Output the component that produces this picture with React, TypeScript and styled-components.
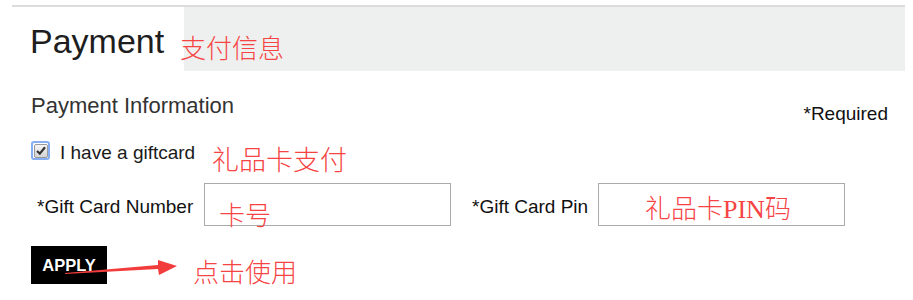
import styled, { createGlobalStyle } from "styled-components";

const GlobalStyle = createGlobalStyle`
  html, body {
    margin: 0;
    padding: 0;
    background: #fff;
  }
  body {
    font-family: "Liberation Sans", Arial, sans-serif;
    color: #222;
  }
`;

const Page = styled.div`
  position: relative;
  width: 913px;
  height: 300px;
  overflow: hidden;
  background: #fff;
`;

const Header = styled.div`
  display: flex;
  margin: 5px 8px 0 12px;
  height: 64px;
  border-top: 2px solid #dcdcdc;
`;

const Title = styled.h1`
  width: 154px;
  margin: 0;
  padding: 14px 0 0 18px;
  font-size: 34px;
  font-weight: 400;
  line-height: 40px;
  color: #1e1e1e;
`;

const GrayPanel = styled.div`
  flex: 1;
  background: #eef0ef;
`;

const InfoRow = styled.div`
  display: flex;
  justify-content: space-between;
  align-items: flex-start;
  padding: 0 25px 0 31px;
  margin-top: 23px;
`;

const SectionTitle = styled.h2`
  margin: 0;
  font-size: 22px;
  font-weight: 400;
  line-height: 24px;
  color: #333;
`;

const Required = styled.span`
  margin-top: 9px;
  font-size: 19px;
  line-height: 22px;
  color: #111;
`;

const CheckRow = styled.label`
  display: flex;
  align-items: flex-start;
  gap: 10px;
  padding-left: 31px;
  margin-top: 16px;
  font-size: 19px;
  line-height: 22px;
  color: #1a1a1a;
`;

const CheckText = styled.span`
  margin-top: 1px;
`;

const CheckBox = styled.span`
  display: flex;
  align-items: center;
  justify-content: center;
  box-sizing: border-box;
  width: 19px;
  height: 19px;
  border: 2px solid #86aef2;
  border-radius: 3px;
  background: #fff;
`;

const CheckInner = styled.span`
  display: flex;
  align-items: center;
  justify-content: center;
  box-sizing: border-box;
  width: 14px;
  height: 14px;
  border: 1px solid #9a9a9a;
  border-radius: 2px;
  background: linear-gradient(#f6f6f6, #d4d4d4);
`;

const FieldsRow = styled.div`
  display: flex;
  align-items: center;
  gap: 21px;
  padding-left: 37px;
  margin-top: 19px;
`;

const Field = styled.div`
  display: flex;
  align-items: center;
  gap: 12px;
`;

const FieldLabel = styled.span<{ $w: number }>`
  width: ${(p) => p.$w}px;
  margin-top: 4px;
  font-size: 19px;
  line-height: 22px;
  color: #111;
  white-space: nowrap;
`;

const TextInput = styled.input`
  box-sizing: border-box;
  width: 247px;
  height: 43px;
  margin: 0;
  border: 1px solid #aaa;
  border-radius: 0;
  background: #fff;
  outline: none;
`;

const ApplyButton = styled.button`
  display: block;
  box-sizing: border-box;
  width: 76px;
  height: 38px;
  margin: 20px 0 0 31px;
  padding: 0;
  border: none;
  background: #000;
  color: #fff;
  font-family: "Liberation Sans", Arial, sans-serif;
  font-size: 16.5px;
  font-weight: 700;
  cursor: pointer;
`;

const Note = styled.span<{ $x: number; $y: number; $size?: number }>`
  position: absolute;
  left: ${(p) => p.$x}px;
  top: ${(p) => p.$y}px;
  font-family: "Liberation Serif", "Noto Sans CJK SC", serif;
  font-size: ${(p) => p.$size ?? 26}px;
  font-weight: 300;
  line-height: 1;
  color: #f64444;
  white-space: nowrap;
  pointer-events: none;
`;

const Arrow = styled.svg`
  position: absolute;
  left: 60px;
  top: 255px;
`;

export default function App() {
  return (
    <Page>
      <GlobalStyle />
      <Header>
        <Title>Payment</Title>
        <GrayPanel />
      </Header>

      <InfoRow>
        <SectionTitle>Payment Information</SectionTitle>
        <Required>*Required</Required>
      </InfoRow>

      <CheckRow>
        <CheckBox>
          <CheckInner>
            <svg width="10" height="9" viewBox="0 0 10 9">
              <path d="M1 5 L3.8 7.6 L9 1.2" fill="none" stroke="#333" strokeWidth="2.2" />
            </svg>
          </CheckInner>
        </CheckBox>
        <CheckText>I have a giftcard</CheckText>
      </CheckRow>

      <FieldsRow>
        <Field>
          <FieldLabel $w={155}>*Gift Card Number</FieldLabel>
          <TextInput type="text" />
        </Field>
        <Field>
          <FieldLabel $w={114}>*Gift Card Pin</FieldLabel>
          <TextInput type="text" />
        </Field>
      </FieldsRow>

      <ApplyButton>APPLY</ApplyButton>

      <Note $x={180} $y={37}>支付信息</Note>
      <Note $x={212} $y={148} $size={27}>礼品卡支付</Note>
      <Note $x={219} $y={204}>卡号</Note>
      <Note $x={645} $y={197}>礼品卡PIN码</Note>
      <Note $x={193} $y={261}>点击使用</Note>

      <Arrow width="125" height="25" viewBox="0 0 125 25">
        <polygon points="5,18 98,10 98,5 117,11 99,20 98,14 5,19" fill="#f23c3c" />
      </Arrow>
    </Page>
  );
}
